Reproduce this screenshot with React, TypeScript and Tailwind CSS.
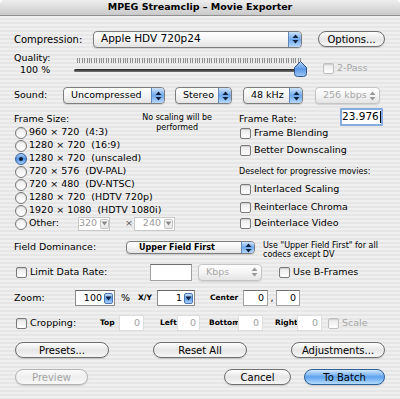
import React from "react";

const FONT = "font-['DejaVu_Sans','Liberation_Sans',sans-serif]";

function Arrows({ color = "#10233f" }: { color?: string }) {
  return (
    <svg width="7" height="10" viewBox="0 0 7 10">
      <path d="M3.5 0.5 L6.5 4 L0.5 4 Z" fill={color} />
      <path d="M3.5 9.5 L6.5 6 L0.5 6 Z" fill={color} />
    </svg>
  );
}

function DownArrow({ color = "#10233f" }: { color?: string }) {
  return (
    <svg width="7" height="5" viewBox="0 0 7 5">
      <path d="M0.5 0.5 L6.5 0.5 L3.5 4.5 Z" fill={color} />
    </svg>
  );
}

function Popup({
  label,
  className,
  disabled,
  textClass = "text-[9.5px] pl-[7px]",
}: {
  label: string;
  className: string;
  disabled?: boolean;
  textClass?: string;
}) {
  return (
    <div
      className={`flex items-stretch overflow-hidden rounded-[4px] border ${
        disabled ? "border-[#c4c4c4] text-[#a8a8a8]" : "border-[#7d7d7d] text-black"
      } bg-gradient-to-b from-white via-[#f4f4f4] to-[#e4e4e4] shadow-[0_1px_1px_rgba(0,0,0,0.12)] ${className}`}
    >
      <div className={`flex flex-1 items-center whitespace-pre ${textClass}`}>{label}</div>
      {disabled ? (
        <div className="flex w-[13px] items-center justify-center">
          <Arrows color="#9a9a9a" />
        </div>
      ) : (
        <div className="flex w-[13px] items-center justify-center rounded-r-[3px] border-l border-[#5d86bb] bg-gradient-to-b from-[#cfe3f9] via-[#6fa8eb] to-[#b7d9fb]">
          <Arrows />
        </div>
      )}
    </div>
  );
}

function Button({
  label,
  className,
  disabled,
  primary,
}: {
  label: string;
  className: string;
  disabled?: boolean;
  primary?: boolean;
}) {
  const skin = primary
    ? "border-[#2f5f97] bg-gradient-to-b from-[#d3e8fd] via-[#5ea3ee] to-[#b5dcfd] text-black"
    : disabled
      ? "border-[#b4b4b4] bg-gradient-to-b from-[#fbfbfb] via-[#eeeeee] to-[#f8f8f8] text-[#a5a5a5]"
      : "border-[#6e6e6e] bg-gradient-to-b from-white via-[#e6e6e6] to-[#f6f6f6] text-black";
  return (
    <div
      className={`flex h-[16px] items-center justify-center rounded-full border text-[10px] shadow-[0_1px_1px_rgba(0,0,0,0.15)] ${skin} ${className}`}
    >
      {label}
    </div>
  );
}

function Check({ disabled }: { disabled?: boolean }) {
  return (
    <div
      className={`h-[11px] w-[11px] shrink-0 rounded-[2px] border ${
        disabled ? "border-[#c0c0c0]" : "border-[#7a7a7a]"
      } bg-gradient-to-b from-[#e9e9e9] to-white shadow-[inset_0_1px_1px_rgba(0,0,0,0.12)]`}
    />
  );
}

function Radio({ on }: { on?: boolean }) {
  return on ? (
    <div className="flex h-[12px] w-[12px] shrink-0 items-center justify-center rounded-full border border-[#35609a] bg-gradient-to-b from-[#a9cdf6] via-[#4d8fe0] to-[#a9d3fb]">
      <div className="h-[4px] w-[4px] rounded-full bg-[#0c1a33]" />
    </div>
  ) : (
    <div className="h-[12px] w-[12px] shrink-0 rounded-full border border-[#777] bg-gradient-to-b from-[#ececec] to-white shadow-[inset_0_1px_1px_rgba(0,0,0,0.1)]" />
  );
}

function Field({
  value,
  className,
  dim,
}: {
  value: string;
  className: string;
  dim?: boolean;
}) {
  return (
    <div
      className={`flex items-center justify-end border bg-white pr-[3px] text-[9.5px] ${
        dim ? "border-[#dedede] text-[#a0a0a0]" : "border-[#a0a0a0] border-t-[#6f6f6f] text-black"
      } ${className}`}
    >
      {value}
    </div>
  );
}

function Combo({ value, className }: { value: string; className: string }) {
  return (
    <div className={`flex items-center border border-[#8a8a8a] border-t-[#666] bg-white text-[9.5px] ${className}`}>
      <div className="flex-1 pr-[2px] text-right">{value}</div>
      <div className="mr-[1px] flex h-[11px] w-[9px] items-center justify-center rounded-[2px] border border-[#4b78b3] bg-gradient-to-b from-[#c5def9] via-[#5d9ce8] to-[#a7d0fa]">
        <DownArrow />
      </div>
    </div>
  );
}

function SmallCombo({ value, className }: { value: string; className: string }) {
  return (
    <div className={`flex items-center border border-[#c8c8c8] bg-white text-[9.5px] text-[#9a9a9a] ${className}`}>
      <div className="flex-1 pr-[3px] text-right">{value}</div>
      <div className="mr-[1px] flex h-[10px] w-[9px] items-center justify-center rounded-[2px] border border-[#c4c4c4] bg-gradient-to-b from-white to-[#e6e6e6]">
        <DownArrow color="#8a8a8a" />
      </div>
    </div>
  );
}

const frameSizes = [
  { label: "960 × 720  (4:3)" },
  { label: "1280 × 720  (16:9)" },
  { label: "1280 × 720  (unscaled)", on: true },
  { label: "720 × 576  (DV-PAL)" },
  { label: "720 × 480  (DV-NTSC)" },
  { label: "1280 × 720  (HDTV 720p)" },
  { label: "1920 × 1080  (HDTV 1080i)" },
];

export default function App() {
  return (
    <div className={`h-[399px] w-[400px] overflow-hidden bg-white text-black ${FONT}`}>
      <div className="h-full w-full overflow-hidden rounded-t-[5px] bg-[repeating-linear-gradient(to_bottom,#efefef_0px,#efefef_2px,#e6e6e6_2px,#e6e6e6_4px)]">
        {/* Title bar */}
        <div className="flex h-[16px] items-center justify-center border-b border-[#8f8f8f] bg-gradient-to-b from-[#eeeeee] via-[#dcdcdc] to-[#c9c9c9] text-[9.5px] font-bold">
          MPEG Streamclip – Movie Exporter
        </div>

        <div className="flex flex-col pl-[14px] text-[9.5px]">
          {/* Compression */}
          <div className="mt-[14px] flex h-[18px] items-center">
            <div className="w-[79px] text-[10px]">Compression:</div>
            <Popup label="Apple HDV 720p24" className="h-[17px] w-[209px]" textClass="text-[10.5px] pl-[7px]" />
            <Button label="Options..." className="ml-[16px] w-[67px]" />
          </div>

          {/* Quality */}
          <div className="mt-[4px] flex h-[26px]">
            <div className="w-[59px] leading-[12px]">
              <div>Quality:</div>
              <div className="pl-[6px]">100 %</div>
            </div>
            <div className="relative w-[235px]">
              <div className="ml-[4px] mt-[6px] h-[5px] w-[224px] bg-[repeating-linear-gradient(to_right,#8d8d8d_0px,#8d8d8d_1px,transparent_1px,transparent_2.4px)]" />
              <div className="ml-[1px] mt-[6px] h-[3px] w-[230px] rounded-full bg-gradient-to-b from-[#222] to-[#777]" />
              <svg className="absolute left-[221px] top-[9px]" width="13" height="16" viewBox="0 0 13 16">
                <defs>
                  <linearGradient id="knob" x1="0" y1="0" x2="0" y2="1">
                    <stop offset="0" stopColor="#b9d6fa" />
                    <stop offset="0.5" stopColor="#5b96e3" />
                    <stop offset="1" stopColor="#9ec9f6" />
                  </linearGradient>
                </defs>
                <path d="M6.5 0.5 L12.5 6.5 L12.5 12.5 Q12.5 15.5 9.5 15.5 L3.5 15.5 Q0.5 15.5 0.5 12.5 L0.5 6.5 Z" fill="url(#knob)" stroke="#2f5687" />
              </svg>
            </div>
            <div className="ml-[15px] mt-[11px] flex h-[11px] items-center">
              <Check disabled />
              <span className="ml-[3px] text-[#a6a6a6]">2-Pass</span>
            </div>
          </div>

          {/* Sound */}
          <div className="mt-[9px] flex h-[17px] items-center">
            <div className="w-[49px]">Sound:</div>
            <Popup label="Uncompressed" className="h-[17px] w-[102px]" />
            <Popup label="Stereo" className="ml-[10px] h-[17px] w-[57px]" />
            <Popup label="48 kHz" className="ml-[11px] h-[17px] w-[60px]" />
            <Popup label="256 kbps" className="ml-[12px] h-[17px] w-[65px]" disabled />
          </div>

          {/* Frame size / rate */}
          <div className="mt-[8px] flex">
            <div className="w-[225px]">
              <div className="flex h-[14px] w-[198px] items-start justify-between">
                <div className="leading-[14px]">Frame Size:</div>
                <div className="mt-[1px] text-center text-[8px] leading-[10px]">
                  No scaling will be
                  <br />
                  performed
                </div>
              </div>
              {frameSizes.map((f) => (
                <div key={f.label} className="flex h-[13px] items-center">
                  <div className="ml-[1px]">
                    <Radio on={f.on} />
                  </div>
                  <span className="ml-[2px] whitespace-pre">{f.label}</span>
                </div>
              ))}
              <div className="flex h-[13px] items-center">
                <div className="ml-[1px]">
                  <Radio />
                </div>
                <span className="ml-[2px] w-[49px]">Other:</span>
                <SmallCombo value="320" className="h-[14px] w-[32px]" />
                <span className="ml-[15px] w-[9px] text-[#555]">×</span>
                <SmallCombo value="240" className="h-[14px] w-[41px]" />
              </div>
            </div>

            <div className="w-[146px]">
              <div className="flex h-[14px] items-start">
                <div className="w-[101px] leading-[14px]">Frame Rate:</div>
                <div className="-mt-[4px] flex h-[18px] w-[43px] items-center justify-end rounded-[1px] border-2 border-[#86abde] bg-white pr-[1px] text-[10.5px]">
                  23.976
                  <span className="ml-[1px] h-[12px] w-px bg-black" />
                </div>
              </div>
              <div className="flex h-[14px] items-center">
                <div className="ml-[1px]">
                  <Check />
                </div>
                <span className="ml-[3px]">Frame Blending</span>
              </div>
              <div className="mt-[3px] flex h-[14px] items-center">
                <div className="ml-[1px]">
                  <Check />
                </div>
                <span className="ml-[3px]">Better Downscaling</span>
              </div>
              <div className="mt-[9px] flex h-[12px] items-center text-[8px]">Deselect for progressive movies:</div>
              <div className="mt-[4px] flex h-[14px] items-center">
                <div className="ml-[1px]">
                  <Check />
                </div>
                <span className="ml-[3px]">Interlaced Scaling</span>
              </div>
              <div className="mt-[4px] flex h-[14px] items-center">
                <div className="ml-[1px]">
                  <Check />
                </div>
                <span className="ml-[3px]">Reinterlace Chroma</span>
              </div>
              <div className="mt-[2px] flex h-[14px] items-center">
                <div className="ml-[1px]">
                  <Check />
                </div>
                <span className="ml-[3px]">Deinterlace Video</span>
              </div>
            </div>
          </div>

          {/* Field dominance */}
          <div className="mt-[10px] flex h-[18px] items-start">
            <div className="w-[112px] leading-[14px]">Field Dominance:</div>
            <Popup label="Upper Field First" className="mt-[1px] h-[13px] w-[129px]" textClass="text-[8px] font-bold pl-[12px]" />
            <div className="ml-[8px] mt-[1px] text-[8px] leading-[9px]">
              Use "Upper Field First" for all
              <br />
              codecs except DV
            </div>
          </div>

          {/* Limit data rate */}
          <div className="mt-[5px] flex h-[18px] items-center">
            <div className="flex w-[136px] items-center">
              <div className="ml-[2px]">
                <Check />
              </div>
              <span className="ml-[3px]">Limit Data Rate:</span>
            </div>
            <Field value="" className="h-[17px] w-[42px]" />
            <Popup label="Kbps" className="ml-[6px] h-[17px] w-[64px]" disabled />
            <div className="ml-[17px]">
              <Check />
            </div>
            <span className="ml-[3px]">Use B-Frames</span>
          </div>

          {/* Zoom */}
          <div className="mt-[9px] flex h-[16px] items-center">
            <div className="w-[61px]">Zoom:</div>
            <Combo value="100" className="h-[16px] w-[40px]" />
            <span className="ml-[6px] w-[17px]">%</span>
            <span className="w-[19px] text-[7.5px] font-bold">X/Y</span>
            <Combo value="1" className="h-[16px] w-[38px]" />
            <span className="ml-[15px] w-[33px] text-[7.5px] font-bold">Center</span>
            <Field value="0" className="h-[16px] w-[25px]" />
            <span className="w-[8px] text-center">,</span>
            <Field value="0" className="h-[16px] w-[24px]" />
          </div>

          {/* Cropping */}
          <div className="mt-[9px] flex h-[16px] items-center">
            <div className="flex w-[86px] items-center">
              <div className="ml-[2px]">
                <Check />
              </div>
              <span className="ml-[3px]">Cropping:</span>
            </div>
            <span className="w-[19px] text-[7.5px] font-bold">Top</span>
            <Field value="0" className="h-[16px] w-[25px]" dim />
            <span className="ml-[16px] w-[17px] text-[7.5px] font-bold">Left</span>
            <Field value="0" className="h-[16px] w-[23px]" dim />
            <span className="ml-[9px] w-[29px] text-[7.5px] font-bold">Bottom</span>
            <Field value="0" className="h-[16px] w-[25px]" dim />
            <span className="ml-[12px] w-[22px] text-[7.5px] font-bold">Right</span>
            <Field value="0" className="h-[16px] w-[25px]" dim />
            <div className="ml-[6px]">
              <Check disabled />
            </div>
            <span className="ml-[3px] text-[#a6a6a6]">Scale</span>
          </div>

          {/* Buttons */}
          <div className="mt-[11px] flex h-[16px] items-center">
            <Button label="Presets..." className="ml-[1px] w-[94px]" />
            <Button label="Reset All" className="ml-[44px] w-[94px]" />
            <Button label="Adjustments..." className="ml-[44px] w-[94px]" />
          </div>

          <div className="mt-[11px] flex h-[16px] items-center">
            <Button label="Preview" className="ml-[1px] w-[73px]" disabled />
            <Button label="Cancel" className="ml-[136px] w-[67px]" />
            <Button label="To Batch" className="ml-[13px] w-[81px]" primary />
          </div>
        </div>
      </div>
    </div>
  );
}
